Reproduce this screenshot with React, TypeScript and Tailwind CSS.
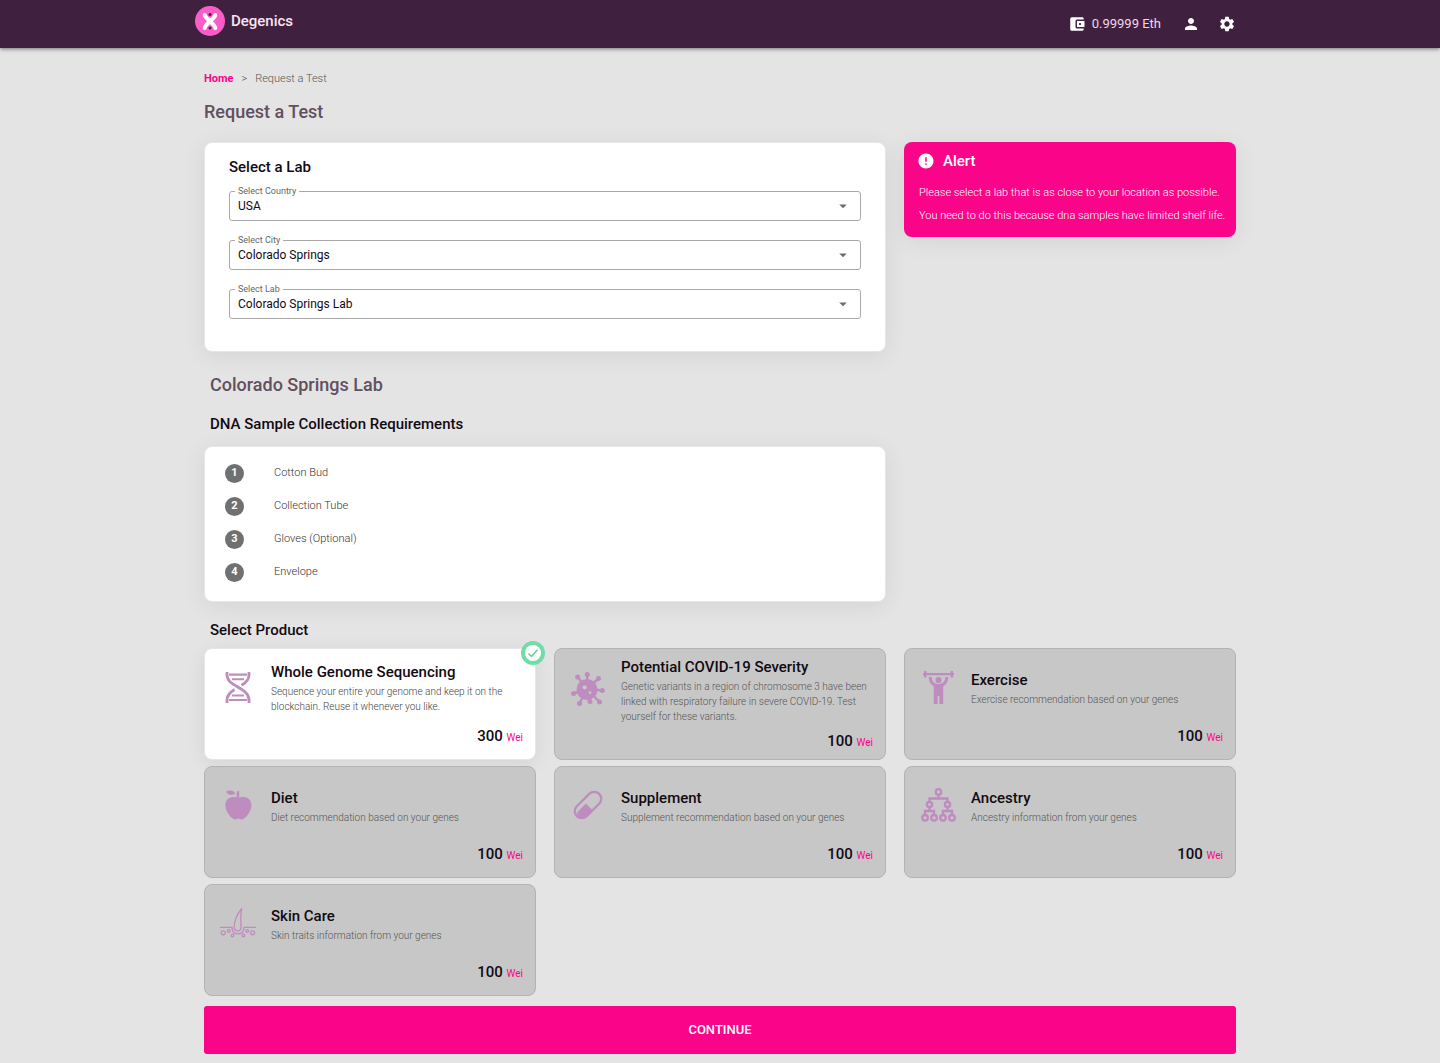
import { useState } from "react";
import type { ReactNode } from "react";
import { MdAccountBalanceWallet, MdArrowDropDown, MdError, MdPerson, MdSettings } from "react-icons/md";

const Logo = () => (
  <svg width="30" height="30" viewBox="0 0 30 30" aria-hidden="true">
    <circle cx="15" cy="15" r="15" fill="#fb5cc8" />
    <g fill="none" stroke="#fff" strokeWidth="4" strokeLinecap="round">
      <path d="M9.7 9C10.5 13 19.5 17.5 20.3 22" />
      <path d="M20.3 9C19.5 13 10.5 17.5 9.7 22" />
    </g>
    <circle cx="15" cy="8.6" r="1.5" fill="#3f213f" />
    <circle cx="15" cy="22" r="1.5" fill="#3f213f" />
  </svg>
);

const DnaIcon = () => (
  <svg width="26" height="31" viewBox="0 0 26 31" fill="none" stroke="currentColor" strokeWidth="2.8">
    <path d="M2 0V3C2 15 24 15 24 28V31" />
    <path d="M24 0V3C24 8 20.5 11 16.5 13.3M9.5 17.5C5.5 20 2 23 2 28V31" />
    <path d="M4 2.6H22M4 28H22" strokeWidth="2.2" />
    <path d="M7 7.2H19M7 23.4H19" strokeWidth="2" />
  </svg>
);

const spikes = [
  [16.3, 2.5],
  [27.5, 6.5],
  [31.3, 18.5],
  [28.5, 30],
  [19, 29.5],
  [8.5, 31.5],
  [2.6, 21.5],
  [6.6, 5],
];

const VirusIcon = () => (
  <svg width="34" height="35" viewBox="0 0 34 35" fill="currentColor">
    {spikes.map(([x, y]) => (
      <g key={`${x}-${y}`}>
        <path d={`M16 17L${x} ${y}`} stroke="currentColor" strokeWidth="2.4" />
        <circle cx={x} cy={y} r="2.5" />
      </g>
    ))}
    <circle cx="16" cy="17.5" r="10.5" />
    <circle cx="13.7" cy="15.3" r="2.1" fill="#c7c7c7" />
    <circle cx="19" cy="20.7" r="1.4" fill="#c7c7c7" />
  </svg>
);

const ExerciseIcon = () => (
  <svg width="31" height="33" viewBox="0 0 31 33" fill="currentColor">
    <path d="M0 2h31v2.2H0zM1 0h2.4v6.6H1zM27.6 0H30v6.6h-2.4z" />
    <circle cx="15.5" cy="9" r="3.1" />
    <path d="M7.2 6C7.2 11 10 14.5 15.5 14.5S23.8 11 23.8 6" fill="none" stroke="currentColor" strokeWidth="3" />
    <path d="M10.8 13.5h9.4V33h-3.8v-8h-1.8v8h-3.8z" />
  </svg>
);

const AppleIcon = () => (
  <svg width="27" height="30" viewBox="0 0 27 30" fill="currentColor">
    <path d="M13.3 8.2C10.5 6.8 6.5 6.5 3.5 8.5C-.5 11.3-.2 17.3 1.8 21C3.8 25 6.5 28.5 9.5 29.5C11 30 12 28.5 13.3 28.5S15.8 30 17.2 29.5C20.2 28.5 23 25 25 21C27 17.3 27.2 11.3 23.2 8.5C20.2 6.5 16 6.8 13.3 8.2Z" />
    <path d="M11.6 8.5V4C11.6 2 12.3.8 14.2.5V8.5Z" />
    <path d="M1 1.8C4-.3 8.5-.2 10.3 3.6C7.5 6 3.2 5.3 1 1.8Z" />
  </svg>
);

const PillIcon = () => (
  <svg width="30" height="30" viewBox="0 0 30 30" fill="none">
    <g transform="rotate(-45 15 15)">
      <rect x="-.8" y="8" width="31.6" height="14" rx="7" stroke="currentColor" strokeWidth="2.3" />
      <path d="M3 12.500H14.500V22H6C2 22-.8 19-.8 15.500C1 15.500 1 12.500 3 12.500Z" fill="currentColor" />
    </g>
  </svg>
);

const AncestryIcon = () => (
  <svg width="35" height="34" viewBox="0 0 35 34" fill="none" stroke="currentColor" strokeWidth="2.3">
    <circle cx="17.5" cy="3.9" r="2.7" />
    <circle cx="8.5" cy="16.6" r="2.6" />
    <circle cx="26.5" cy="16.6" r="2.6" />
    <circle cx="4" cy="29.8" r="2.8" />
    <circle cx="13" cy="29.8" r="2.8" />
    <circle cx="22" cy="29.8" r="2.8" />
    <circle cx="31" cy="29.8" r="2.8" />
    <path d="M17.5 6.5V10.5M8.5 14V10.5H26.5V14" />
    <path d="M8.5 19V23M4 27V23H13V27M26.5 19V23M22 27V23H31V27" />
  </svg>
);

const SkinIcon = () => (
  <svg width="36" height="30" viewBox="0 0 36 30" fill="none" stroke="currentColor" strokeWidth="1.3">
    <path d="M0 19.3H12C12 23.5 14.5 25.8 18 25.8S24 23.5 24 19.3H36" />
    <path d="M21.6.8C17 6 13.8 14 14.2 20C14.5 23.8 20.8 23.8 21 20C21.2 14 20 8 21.6.8Z" />
    <circle cx="3.2" cy="24.8" r="2" />
    <circle cx="8.8" cy="23" r="1.3" />
    <circle cx="12.6" cy="27.5" r="1.3" />
    <circle cx="23.4" cy="27.5" r="1.3" />
    <circle cx="27.2" cy="23" r="1.3" />
    <circle cx="32.6" cy="24.8" r="2" />
  </svg>
);

const labFields = [
  { id: "country", label: "Select Country", options: ["USA"] },
  { id: "city", label: "Select City", options: ["Colorado Springs"] },
  { id: "lab", label: "Select Lab", options: ["Colorado Springs Lab"] },
];

const requirements = ["Cotton Bud", "Collection Tube", "Gloves (Optional)", "Envelope"];

type Product = { name: string; description: string; price: number; icon: ReactNode };

const products: Product[] = [
  {
    name: "Whole Genome Sequencing",
    description: "Sequence your entire your genome and keep it on the blockchain. Reuse it whenever you like.",
    price: 300,
    icon: <DnaIcon />,
  },
  {
    name: "Potential COVID-19 Severity",
    description:
      "Genetic variants in a region of chromosome 3 have been linked with respiratory failure in severe COVID-19. Test yourself for these variants.",
    price: 100,
    icon: <VirusIcon />,
  },
  { name: "Exercise", description: "Exercise recommendation based on your genes", price: 100, icon: <ExerciseIcon /> },
  { name: "Diet", description: "Diet recommendation based on your genes", price: 100, icon: <AppleIcon /> },
  { name: "Supplement", description: "Supplement recommendation based on your genes", price: 100, icon: <PillIcon /> },
  { name: "Ancestry", description: "Ancestry information from your genes", price: 100, icon: <AncestryIcon /> },
  { name: "Skin Care", description: "Skin traits information from your genes", price: 100, icon: <SkinIcon /> },
];

const Header = () => (
  <header className="bg-[#3f213f] text-white shadow-[0_1px_4px_rgba(0,0,0,0.5)]">
    <div className="mx-auto flex h-12 max-w-[1050px] items-center justify-between">
      <a href="#" className="mb-1.5 flex items-center gap-1.5 text-[15px] font-medium text-[#fbe3f5]">
        <Logo />
        Degenics
      </a>
      <div className="flex items-center">
        <MdAccountBalanceWallet size={18} aria-hidden="true" />
        <span className="mr-3 ml-1.5 text-[13px] text-[#f6d5ec]">0.99999 Eth</span>
        <button type="button" aria-label="Account" className="p-[9px]">
          <MdPerson size={18} />
        </button>
        <button type="button" aria-label="Settings" className="p-[9px]">
          <MdSettings size={18} />
        </button>
      </div>
    </div>
  </header>
);

const ProductCard = ({ product, selected, onSelect }: { product: Product; selected: boolean; onSelect: () => void }) => (
  <button
    type="button"
    aria-pressed={selected}
    onClick={onSelect}
    className={
      selected
        ? "relative flex min-h-28 flex-col rounded-lg border border-[#e6e6e6] bg-white pt-1.5 pr-3 text-left shadow-[0_4px_20px_rgba(0,0,0,0.07)]"
        : "relative flex min-h-28 flex-col rounded-lg border border-[#b3b3b3] bg-[#c7c7c7] pt-1.5 pr-3 text-left"
    }
  >
    <span className="flex min-h-16 w-full items-center">
      <span className="flex w-[66px] shrink-0 justify-center text-[#bf8cbf]">{product.icon}</span>
      <span className="block">
        <span className="block text-[15px] leading-6 font-medium">{product.name}</span>
        <span className={selected ? "block text-[10px] leading-[15px] font-light text-[#444]" : "block text-[10px] leading-[15px] font-light text-[#555]"}>
          {product.description}
        </span>
      </span>
    </span>
    <span className="mt-[5px] self-end text-[15px] leading-6 font-medium">
      {product.price} <span className="text-[10px] font-normal text-[#fa0589]">Wei</span>
    </span>
    {selected && (
      <span className="absolute -top-2 -right-2.5 flex size-6 items-center justify-center rounded-full bg-[#72dba8]">
        <svg width="16" height="16" viewBox="0 0 16 16" fill="none">
          <circle cx="8" cy="8" r="8" fill="#fff" />
          <path d="M3.5 8.5L6.5 11.5L12.5 4.8" stroke="#5fcf98" strokeWidth="1.5" />
        </svg>
      </span>
    )}
  </button>
);

export default function App() {
  const [selected, setSelected] = useState(0);

  return (
    <div className="min-h-screen bg-[#e4e4e4] font-[Roboto,sans-serif] text-[#120a12]">
      <Header />
      <main className="mx-auto max-w-[1032px] pt-[23px] pb-2">
        <nav aria-label="Breadcrumb" className="flex items-center gap-2 text-[11px] leading-4 font-light text-[#555]">
          <a href="#" className="font-bold text-[#fa0589]">
            Home
          </a>
          <span>&gt;</span>
          <span>Request a Test</span>
        </nav>
        <h1 className="mt-[13px] text-lg leading-6 font-medium text-[#62505f]">Request a Test</h1>

        <div className="mt-[18px] grid grid-cols-3 items-start gap-x-[18px]">
          <section className="col-span-2 rounded-lg border border-[#e6e6e6] bg-white px-6 pt-3 pb-8 shadow-[0_4px_24px_rgba(0,0,0,0.07)]">
            <h2 className="text-[15px] leading-6 font-medium">Select a Lab</h2>
            <div className="mt-3 flex flex-col gap-[19px]">
              {labFields.map((field) => (
                <div key={field.id} className="relative">
                  <label htmlFor={field.id} className="absolute -top-1.5 left-1.5 bg-white px-[3px] text-[9px] leading-3 text-[#666]">
                    {field.label}
                  </label>
                  <select
                    id={field.id}
                    className="block h-[30px] w-full appearance-none rounded-[3px] border border-[#aaa] bg-transparent px-2 text-xs"
                  >
                    {field.options.map((option) => (
                      <option key={option}>{option}</option>
                    ))}
                  </select>
                  <MdArrowDropDown size={18} className="pointer-events-none absolute top-1.5 right-[9px] text-[#6b6b6b]" />
                </div>
              ))}
            </div>
          </section>

          <aside className="rounded-lg bg-[#fa0589] pt-[9px] pr-2 pb-2.5 pl-[13px] text-white shadow-[0_4px_24px_rgba(0,0,0,0.07)]">
            <h2 className="flex items-center gap-2 text-[15px] leading-5 font-medium">
              <MdError size={18} aria-hidden="true" />
              Alert
            </h2>
            <p className="mt-2.5 pl-0.5 text-[11px] leading-[23px] font-light">
              Please select a lab that is as close to your location as possible.
              <br />
              You need to do this because dna samples have limited shelf life.
            </p>
          </aside>
        </div>

        <h2 className="mt-[21px] pl-1.5 text-lg leading-6 font-medium text-[#62505f]">Colorado Springs Lab</h2>
        <h3 className="mt-[15px] pl-1.5 text-[15px] leading-6 font-medium">DNA Sample Collection Requirements</h3>
        <div className="mt-2.5 grid grid-cols-3 gap-x-[18px]">
          <ol className="col-span-2 rounded-lg border border-[#e6e6e6] bg-white px-5 pt-2.5 pb-3 shadow-[0_4px_24px_rgba(0,0,0,0.07)]">
            {requirements.map((item, i) => (
              <li key={item} className="flex h-[33px] items-center text-[11px] font-light text-[#333]">
                <span className="mr-[30px] flex size-[19px] items-center justify-center rounded-full bg-[#707070] font-bold text-white">
                  {i + 1}
                </span>
                {item}
              </li>
            ))}
          </ol>
        </div>

        <h3 className="mt-4 pl-1.5 text-[15px] leading-6 font-medium">Select Product</h3>
        <div className="mt-1.5 grid grid-cols-3 gap-x-[18px] gap-y-1.5">
          {products.map((product, i) => (
            <ProductCard key={product.name} product={product} selected={i === selected} onSelect={() => setSelected(i)} />
          ))}
        </div>

        <button type="button" className="mt-2.5 h-12 w-full rounded-[3px] bg-[#fa0589] text-[13px] font-medium text-white">
          CONTINUE
        </button>
      </main>
    </div>
  );
}
